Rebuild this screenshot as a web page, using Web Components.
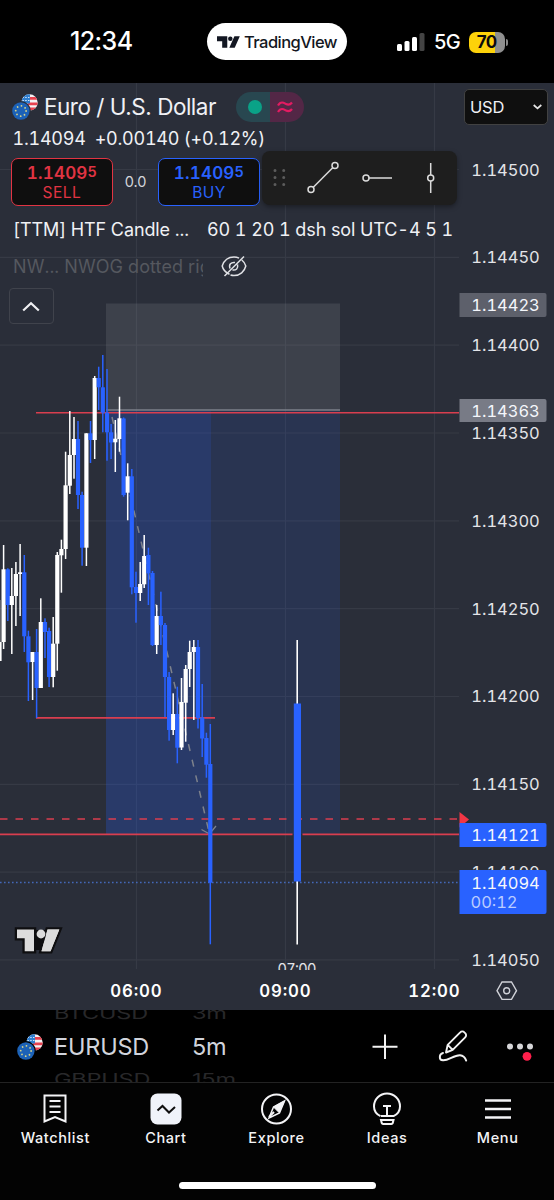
<!DOCTYPE html>
<html lang="en">
<head>
  <meta charset="UTF-8">
  <meta name="viewport" content="width=device-width, initial-scale=1.0">
  <title>EURUSD 5m</title>
  <style>
    body {margin: 0; background: #000;}
  </style>
</head>

<body>
  <trading-app></trading-app>

  <script>
    const define = (name, html) => {
      window.customElements.define(name, class extends HTMLElement {
        constructor() {
          super();
          this.attachShadow({mode: 'open'}).innerHTML = typeof html === 'function' ? html(this) : html;
        }
      });
    };

    // [x, high, body top, body bottom, low, up]
    const candles = [
      [-0.5, 600, 642, 661, 661, 1],
      [3.6, 545, 569.3, 642, 649, 1],
      [7.8, 568.3, 569.3, 605, 621, 0],
      [11.8, 568, 596, 605, 654, 1],
      [15.9, 562, 574, 596, 626, 1],
      [20.1, 544, 572.3, 574, 616, 1],
      [24.3, 555, 572.3, 636.3, 652, 0],
      [28.4, 630.7, 636.3, 662.3, 701, 0],
      [32.6, 652, 652, 662, 700, 1],
      [36.6, 629, 652, 688, 718, 0],
      [40.8, 598.3, 622, 688, 688, 1],
      [45, 618.3, 622, 632, 658, 0],
      [49.1, 627.7, 631, 677, 687, 0],
      [53.2, 617, 643.7, 677, 687.3, 1],
      [57.3, 552, 555, 643.7, 670.7, 1],
      [61.4, 539.7, 549, 555.3, 592.7, 1],
      [65.6, 451.7, 485.3, 549, 559, 1],
      [69.8, 411, 455, 485.7, 494, 1],
      [74, 417, 439, 455, 478.7, 1],
      [78, 421, 439, 495, 509, 0],
      [82.1, 491.7, 495, 547.7, 565.7, 0],
      [86.4, 433.3, 433.3, 547.7, 566, 1],
      [90.5, 421, 433.3, 440, 463, 0],
      [94.7, 376, 378, 440, 459, 1],
      [98.7, 366.7, 378, 387.3, 410, 0],
      [102.8, 355, 387.3, 412.7, 432.3, 0],
      [107, 369, 412.7, 432.3, 460.7, 0],
      [111.1, 424, 432.3, 442.5, 459, 0],
      [115.3, 420, 438.7, 442.3, 472, 1],
      [119.5, 396.7, 418.3, 439, 451.7, 1],
      [123.6, 417.5, 418.5, 495, 496.7, 0],
      [127.7, 463.3, 476.3, 492.7, 520.3, 1],
      [131.8, 469, 476.3, 587.3, 594.3, 0],
      [136, 571.7, 587, 593, 622.7, 0],
      [140.2, 562, 584, 593, 601, 1],
      [144.2, 535, 556, 584.3, 588, 1],
      [148.4, 547.7, 555, 573.3, 605, 0],
      [152.5, 571, 573, 645, 646, 0],
      [156.7, 605, 616, 645, 654, 1],
      [160.9, 591.7, 616, 625, 645, 0],
      [165, 623, 625, 677, 717, 0],
      [169.1, 672, 677, 730, 740.7, 0],
      [173.2, 693.3, 714, 730, 735, 1],
      [177.3, 686.7, 714, 747.7, 763.3, 0],
      [181.5, 678, 702, 747.5, 750, 1],
      [185.7, 665, 669, 702.7, 741.7, 1],
      [189.7, 640.7, 652, 669, 687, 1],
      [193.8, 640, 647, 652, 720, 1],
      [198, 640, 647, 718, 728.5, 0],
      [202.2, 684, 717.5, 738.5, 757, 0],
      [206.4, 732.7, 738, 764.7, 777.7, 0],
      [210.3, 724, 764, 882.7, 944.3, 0]
    ];

    const prices = ['1.14500', '1.14450', '1.14400', '1.14350', '1.14300', '1.14250', '1.14200', '1.14150', '1.14100', '1.14050'];
    const priceY = i => 169.5 + i * 87.83;
    const times = [[136, '06:00'], [285, '09:00'], [434, '12:00']];

    // flags of the currency pair
    define('pair-flags', `
      <style>
        :host {display: block; width: 26px; height: 26px;}
        svg {display: block;}
      </style>
      <svg width="26" height="26" viewBox="0 0 26 26">
        <defs><clipPath id="us"><circle cx="17.5" cy="8.5" r="8.2"/></clipPath></defs>
        <g clip-path="url(#us)">
          <rect x="8" width="18" height="18" fill="#f4f1f3"/>
          <path d="M16 4.3h10M16 9.8h10M8 14.8h18" stroke="#e8414f" stroke-width="2.7"/>
          <rect x="8" width="10" height="9.5" fill="#2f7fd0"/>
          <path d="M10.5 3.5h7M10.5 6.5h7" stroke="#e8f2ff" stroke-width="1.2" stroke-dasharray="1.3 1.5"/>
        </g>
        <circle cx="8.9" cy="17" r="10" fill="var(--ring, #2a2e39)"/>
        <circle cx="8.9" cy="17" r="8.7" fill="#1c62b7"/>
        <circle cx="8.9" cy="17" r="5.2" fill="none" stroke="#d8d489" stroke-width="1.8" stroke-linecap="round" stroke-dasharray="0.01 4.07"/>
      </svg>
    `);

    define('status-bar', `
      <style>
        :host {display: flex; height: 83px; box-sizing: border-box; color: #fff; background: #000;}
        .time {width: 207px; box-sizing: border-box; padding: 26px 0 0 70px; font-size: 25px; line-height: 31px; font-weight: 550; letter-spacing: -.6px;}
        .pill {display: flex; align-items: center; justify-content: center; gap: 4px; width: 140px; height: 37px; margin-top: 23px; border-radius: 20px; background: #fff; color: #131722; font-size: 16.5px; font-weight: 500;}
        .brand {letter-spacing: -.55px;}
        .right {display: flex; align-items: center; height: 36px; margin: 24px 0 0 50px;}
        .net {margin-left: 9px; font-size: 20px; font-weight: 500; letter-spacing: -.6px;}
        .battery {display: flex; align-items: center; justify-content: center; box-sizing: border-box; width: 36px; height: 21px; margin: 0 2px 0 9px; padding-right: 1px; border-radius: 7px; background: linear-gradient(90deg, #fdd20a 26px, #8f8f8f 26px); color: #0b0b0b; font-size: 17px; font-weight: 700; letter-spacing: -.6px;}
        .nub {width: 2px; height: 7px; border-radius: 0 2px 2px 0; background: #888; margin-left: -1px;}
      </style>
      <div class="time">12:34</div>
      <div class="pill">
        <svg width="23" height="12" viewBox="0 0 23.5 12" fill="#131722"><path d="M0 0h10.5v12H5.3V5.2H0zM17.8 0h5.5l-5.2 12h-5.5z"/><circle cx="13.6" cy="2.6" r="2.3"/></svg>
        <span class="brand">TradingView</span>
      </div>
      <div class="right">
        <svg width="28" height="20" viewBox="0 0 28 20" fill="#fff"><rect y="12" width="5" height="7" rx="1.5"/><rect x="7.5" y="9" width="5" height="10" rx="1.5"/><rect x="15" y="5" width="5" height="14" rx="1.5"/><rect x="22.5" y="1" width="5" height="18" rx="1.5" fill="#444"/></svg>
        <span class="net">5G</span>
        <span class="battery">70</span><i class="nub"></i>
      </div>
    `);

    define('price-chart', () => {
      const grid = prices.map((p, i) => `<path d="M0 ${priceY(i)}H459"/>`).join('') +
        times.map(t => `<path d="M${t[0] + .5} 83V969"/>`).join('');
      const bars = candles.map(([x, h, a, b, l, up]) => `
        <g fill="${up ? '#fff' : '#2962ff'}"><rect x="${x - .75}" y="${h}" width="1.5" height="${l - h}"/><rect x="${x - 2.1}" y="${a}" width="4.2" height="${b - a}"/></g>`).join('');
      const axis = prices.map((p, i) => `<text x="471.3" y="${priceY(i) + 6}" textLength="68.5">${p}</text>`).join('');
      const hours = times.map(t => `<text x="${t[0] - 25.8}" y="997" textLength="51.5">${t[1]}</text>`).join('');
      return `
      <style>
        :host {display: block; background: #2a2e39;}
        svg {display: block;}
        text {fill: #e3e4e8; font-size: 16.5px; font-variant-numeric: tabular-nums;}
        .marks text {fill: #f4f6fb;}
        .hours text {font-weight: 600; font-size: 16.8px; fill: #fff;}
      </style>
      <svg width="554" height="927" viewBox="0 83 554 927">
        <g stroke="#363a45" stroke-width="1.2">${grid}</g>
        <rect x="106" y="303.5" width="234" height="107" fill="#a0a0a5" fill-opacity=".17"/>
        <rect x="106" y="411" width="234" height="423" fill="#2962ff" fill-opacity=".12"/>
        <rect x="106" y="411" width="105" height="423" fill="#2962ff" fill-opacity=".14"/>
        <path d="M106 410h234" stroke="#7d808a" stroke-width="1.6"/>
        <path d="M112 417L209 832" fill="none" stroke="#7e828c" stroke-width="1.5" stroke-dasharray="7 9"/>
        <path d="M201.5 829.5l8 4.5 6.5-8" fill="none" stroke="#7e828c" stroke-width="1.3"/>
        <g stroke="#d93e4f" stroke-width="1.6" fill="none">
          <path d="M36 412.7H459M36 717.9H215M0 834.4H292.5M302.5 834.4H459"/>
          <path d="M0 819H459" stroke-dasharray="7.5 8"/>
        </g>
        <path d="M0 882.5H459" stroke="#4468b8" stroke-width="1.4" stroke-dasharray="1.6 2.4"/>
        ${bars}
        <path d="M297.2 640v64M297.2 881v63.5" stroke="#fff" stroke-width="1.6"/>
        <rect x="293.8" y="703.5" width="7.2" height="178" fill="#2962ff"/>
        <g>${axis}</g>
        <path d="M459.5 812l9.5 7.5-9.5 8z" fill="#f23645"/>
        <g>
          <path d="M459.5 293h85a2 2 0 0 1 2 2v20a2 2 0 0 1-2 2h-85z" fill="#5d606b"/>
          <path d="M459.5 399h85a2 2 0 0 1 2 2v19a2 2 0 0 1-2 2h-85z" fill="#787b86"/>
          <path d="M459.5 823h85a2 2 0 0 1 2 2v20a2 2 0 0 1-2 2h-85zM459.5 870h85a2 2 0 0 1 2 2v40a2 2 0 0 1-2 2h-85z" fill="#2962ff"/>
        </g>
        <g class="marks">
          <text x="471.3" y="311" textLength="68.5">1.14423</text>
          <text x="471.3" y="416.5" textLength="68.5">1.14363</text>
          <text x="471.3" y="841" textLength="68.5">1.14121</text>
          <text x="471.3" y="889" textLength="68.5">1.14094</text>
          <text x="470.5" y="908" textLength="47" style="fill: #b9ccff">00:12</text>
        </g>
        <g class="hours">${hours}</g>
        <clipPath id="pane"><rect y="83" width="459" height="887"/></clipPath>
        <text x="277.5" y="974" textLength="39" clip-path="url(#pane)" style="font-size: 14.5px">07:00</text>
        <g fill="#dcdcdc" stroke="#0e0e10" stroke-width="4.5" paint-order="stroke">
          <path d="M17 929.6h17v21.6h-9.3v-13H17zM47.5 929.6h11.8L50.5 951.2H41.5z"/>
          <path d="M34 930h12v8l-6 12h-6z" fill="#0e0e10" stroke="none"/>
          <circle cx="41" cy="934" r="4.4" stroke="none"/>
          <path d="M47.5 929.6h11.8L50.5 951.2H41.5z" stroke="none"/>
        </g>
        <g fill="none" stroke="#d0d2d8" stroke-width="1.4"><path d="M502 982h9.5l5 8.7-5 8.7H502l-5-8.7z"/><circle cx="506.7" cy="990.7" r="3"/></g>
      </svg>`;
    });

    define('trade-button', `
      <style>
        :host {display: flex; flex-direction: column; align-items: center; box-sizing: border-box; width: 102px; height: 48px; padding-top: 4px; border: 1.5px solid currentColor; border-radius: 7px; background: #0f0f0f;}
        .price {font-size: 17px; line-height: 20px; height: 20px; font-weight: 600; letter-spacing: .2px; font-variant-numeric: tabular-nums;}
        .side {font-size: 15.5px; line-height: 20px; letter-spacing: .5px;}
        ::slotted(small) {font-size: 14.5px; position: relative; top: -2px;}
      </style>
      <div class="price"><slot></slot></div>
      <div class="side"><slot name="side"></slot></div>
    `);

    define('drawing-toolbar', `
      <style>
        :host {display: block; width: 195px; height: 54px; border-radius: 8px; background: #1e1e1e; box-shadow: 0 2px 5px rgba(0, 0, 0, .35);}
        svg {display: block;}
      </style>
      <svg width="195" height="54" viewBox="262 151 195 54" fill="none" stroke="#dbdbdb" stroke-width="1.5">
        <path d="M275 170.5h9.5M275 177.5h9.5M275 184.5h9.5" stroke="#5c5c5c" stroke-width="3" stroke-linecap="round" stroke-dasharray=".01 8.7"/>
        <circle cx="311" cy="189.5" r="3"/><circle cx="335" cy="165.5" r="3"/><path d="M313.3 187.2l19.4-19.4"/>
        <circle cx="366" cy="178" r="3"/><path d="M369 178h23"/>
        <circle cx="430.7" cy="178" r="3"/><path d="M430.7 163v12M430.7 181v12"/>
      </svg>
    `);

    define('chart-legend', `
      <style>
        :host {display: block; color: #f0f1f5;}
        .top {display: flex; justify-content: space-between; padding: 6px 6px 0 12px;}
        .title {display: flex; align-items: center; height: 36px;}
        .name {margin-left: 6px; font-size: 22.5px; letter-spacing: -.48px; line-height: 30px;}
        .badge {display: flex; width: 68px; height: 30px; margin-left: 20px; border-radius: 15px; overflow: hidden;}
        .open, .approx {display: flex; align-items: center; justify-content: center; width: 34px;}
        .open {background: #284750;}
        .open i {width: 14px; height: 14px; border-radius: 50%; background: #0aa287; margin-left: 3px;}
        .approx {background: #532746;}
        .currency {display: flex; align-items: center; justify-content: space-between; box-sizing: border-box; width: 84px; height: 36px; padding: 0 5px; border: 1.5px solid #414141; border-radius: 5px; background: #0f0f0f; font-size: 16.5px; letter-spacing: -.2px;}
        .change {display: flex; gap: 9px; height: 28px; padding-left: 12.5px; font-size: 18px; line-height: 28px; letter-spacing: -.25px; font-variant-numeric: tabular-nums;}
        .trade {display: flex; align-items: flex-start; padding: 3px 0 0 11px; height: 58px; box-sizing: border-box;}
        .trade trade-button {margin-top: 2px;}
        .spread {width: 45px; padding-top: 15px; text-align: center; font-size: 14.5px; line-height: 22px; color: #d3d5db;}
        drawing-toolbar {margin: -5px 0 0 2px;}
        .study {display: flex; align-items: center; box-sizing: border-box; width: 453px; height: 37px; padding-left: 13px; overflow: hidden; white-space: nowrap; font-size: 18px; font-variant-numeric: tabular-nums;}
        .study span {letter-spacing: -.1px;}
        .study span + span {margin-left: 18px;}
        .hidden {height: 36px; color: #55585f;}
        .hidden .args {width: 190px; overflow: hidden; letter-spacing: .1px;}
        .collapse {display: flex; align-items: center; justify-content: center; box-sizing: border-box; width: 45px; height: 36px; margin: 4px 0 0 8.5px; border: 1.5px solid #40434c; border-radius: 4px;}
      </style>
      <div class="top">
        <div class="title">
          <pair-flags></pair-flags>
          <span class="name">Euro / U.S. Dollar</span>
          <div class="badge">
            <div class="open"><i></i></div>
            <div class="approx"><svg width="34" height="30" fill="none" stroke="#e31b62" stroke-width="2.2"><path d="M8 13.5c3-5 6-2.5 8-1.5s4 1 6-1.5M8 20c3-5 6-2.5 8-1.5s4 1 6-1.5"/></svg></div>
          </div>
        </div>
        <div class="currency">USD <svg width="9" height="6" fill="none" stroke="#e6e6e6" stroke-width="1.7"><path d="M.7 1l3.8 3.3L8.3 1"/></svg></div>
      </div>
      <div class="change"><span>1.14094</span><span>+0.00140 (+0.12%)</span></div>
      <div class="trade">
        <trade-button style="color: #e13443">1.1409<small>5</small><span slot="side">SELL</span></trade-button>
        <div class="spread">0.0</div>
        <trade-button style="color: #2962ff">1.1409<small>5</small><span slot="side">BUY</span></trade-button>
        <drawing-toolbar></drawing-toolbar>
      </div>
      <div class="study"><span>[TTM] HTF Candle ...</span><span>60 1 20 1 dsh sol UTC-4 5 15</span></div>
      <div class="study hidden">
        <span class="args">NW... NWOG dotted right</span>
        <svg width="28" height="24" viewBox="0 0 28 24" fill="none" stroke="#e0e1e5" stroke-width="1.5" style="margin-left: 17px">
          <path d="M9.5 20.2C5.5 18.5 3 15.5 2.2 12 4 6.5 8.5 3 14 3c2 0 3.5.4 5 1.2M10.5 21c1 .3 2.2.5 3.5.5 6 0 10.5-4 11.8-9.5-.8-2.5-2-4.5-4-6M24 2.5L4.5 22M10 14.5c-1.5-4 1-6.5 5-6M17.5 10.5c1 4-1.5 6-5 5.5"/>
        </svg>
      </div>
      <div class="collapse"><svg width="18" height="11" fill="none" stroke="#f0f0f3" stroke-width="2.2"><path d="M1.2 9.5L9 2.3l7.8 7.2"/></svg></div>
    `);

    define('symbol-bar', `
      <style>
        :host {display: flex; box-sizing: border-box; height: 73px; background: #000; border-bottom: 1px solid #232323; color: #d1d4dc; overflow: hidden;}
        pair-flags {--ring: #000; margin: 24px 0 0 17px; flex: none;}
        .wheel {display: flex; flex-direction: column; margin-left: 11px; width: 139px; font-size: 23.5px; line-height: 32px; letter-spacing: -.2px;}
        .wheel.frame {margin-left: -1px; width: 171px;}
        .far {color: #28282a; transform: scaleY(.68);}
        .wheel :first-child {margin-top: -12px;}
        .wheel .now {margin: 1px 0;}
        .tools {display: flex; align-items: center;}
        svg {display: block;}
      </style>
      <pair-flags></pair-flags>
      <div class="wheel"><span class="far">BTCUSD</span><span class="now">EURUSD</span><span class="far">GBPUSD</span></div>
      <div class="wheel frame"><span class="far">3m</span><span class="now">5m</span><span class="far">15m</span></div>
      <div class="tools">
        <svg width="191" height="72" viewBox="363 1010 191 72" fill="none" stroke="#f2f2f2" stroke-width="2">
          <path d="M385 1034.5v24.5M372.5 1046.7h25"/>
          <g stroke-linejoin="round" stroke-linecap="round" stroke-width="1.9">
            <path d="M446 1052.5l1.7-7.7 12.5-12.5a2.9 2.9 0 0 1 4.2 0l.8.8a2.9 2.9 0 0 1 0 4.2l-12.5 12.5zM447.7 1044.8l5 5"/>
            <path d="M443 1053c-4 1-4.5 7 0 7.3 5.5.4 11-5.3 17-5 3 .2 5.2 2.5 6.2 5.3"/>
          </g>
          <g fill="#d6d6d9" stroke="none"><circle cx="510" cy="1046.5" r="3"/><circle cx="520" cy="1046.5" r="3"/><circle cx="530" cy="1046.5" r="3"/><circle cx="527" cy="1056.3" r="4.4" fill="#ff1f4b"/></g>
        </svg>
      </div>
    `);

    define('tab-item', `
      <style>
        :host {display: flex; flex-direction: column; align-items: center; width: 110.6px; font-size: 14.5px; line-height: 20px; font-weight: 550; letter-spacing: .6px;}
        ::slotted(svg) {display: block; margin-bottom: 1px;}
      </style>
      <slot name="icon"></slot>
      <slot></slot>
    `);

    define('tab-bar', `
      <style>
        :host {display: flex; flex-direction: column; align-items: center; height: 117px; background: #030303; color: #f4f4f6;}
        nav {display: flex; width: 554px; height: 99px; padding-top: 8px; box-sizing: border-box;}
        .home {width: 197px; height: 7px; border-radius: 4px; background: #fff;}
      </style>
      <nav>
        <tab-item><svg slot="icon" width="36" height="36" fill="none" stroke="#f4f4f6" stroke-width="2"><path d="M7.5 4.5h21v26l-10.5-4.5-10.5 4.5zM12.5 10h11M12.5 15.5h11M12.5 21h11"/></svg>Watchlist</tab-item>
        <tab-item><svg slot="icon" width="36" height="36"><rect x="2.5" y="2.5" width="31" height="31" rx="7" fill="#f0f3fa"/><path d="M9.5 19.5l5-4.5 6.5 6.5 6-5.5" fill="none" stroke="#0f0f0f" stroke-width="2"/></svg>Chart</tab-item>
        <tab-item><svg slot="icon" width="36" height="36" fill="none" stroke="#f4f4f6" stroke-width="2"><circle cx="18.5" cy="18" r="14.5"/><path d="M26.5 10l-5 12-8.5 4-2 1 1-2.5 3.5-8.5z" stroke-width="1.5"/><path d="M26.5 10l-11 6 5.5 5.5z" fill="#f4f4f6" stroke-width="1"/><path d="M11 26l5-5"/></svg>Explore</tab-item>
        <tab-item><svg slot="icon" width="36" height="36" fill="none" stroke="#f4f4f6" stroke-width="2"><path d="M12 25h12.5M11.5 25.2C7.500 23.200 5 20 5 15.500a13 13 0 0 1 26 0c0 4.500-2.500 7.700-6.500 9.700M14 15h8M18 15v10M12 29h12.500l-.8 3.200q-.3.800-1.200.8h-8.500q-.9 0-1.200-.8z"/></svg>Ideas</tab-item>
        <tab-item><svg slot="icon" width="36" height="36" fill="none" stroke="#f4f4f6" stroke-width="2.3"><path d="M5 9.500h26M5 18h26M5 26.500h26"/></svg>Menu</tab-item>
      </nav>
      <div class="home"></div>
    `);

    define('trading-app', `
      <style>
        :host {display: flex; flex-direction: column; width: 554px; height: 1200px; overflow: hidden; font-family: Inter, "Liberation Sans", sans-serif;}
        .stage {display: grid; height: 927px;}
        .stage > * {grid-area: 1 / 1;}
      </style>
      <status-bar></status-bar>
      <div class="stage">
        <price-chart></price-chart>
        <chart-legend></chart-legend>
      </div>
      <symbol-bar></symbol-bar>
      <tab-bar></tab-bar>
    `);
  </script>
</body>
</html>
